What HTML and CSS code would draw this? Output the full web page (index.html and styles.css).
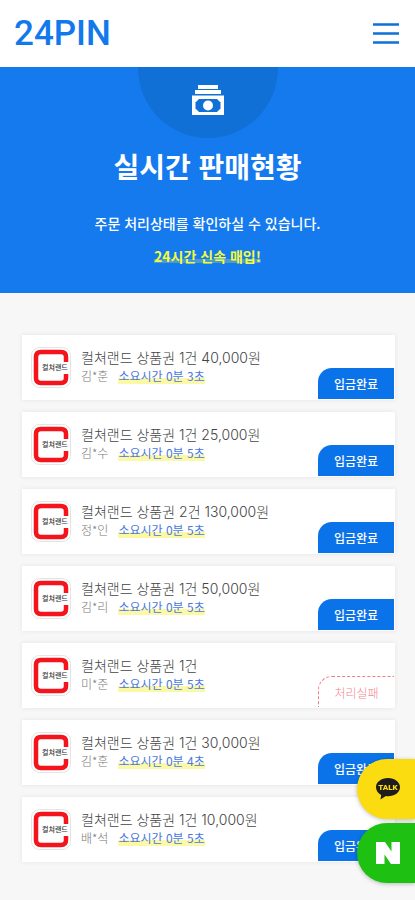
FILE: index.html
```
<!DOCTYPE html>
<html lang="ko">
<head>
<meta charset="UTF-8" />
<meta name="viewport" content="width=device-width, initial-scale=1" />
<title>24PIN 실시간 판매현황</title>
<link rel="stylesheet" href="styles.css">
</head>
<body>
  <header class="header">
    <a href="#" class="logo">24PIN</a>
    <button type="button" class="menu-btn" aria-label="메뉴">
      <svg width="26" height="22" viewBox="0 0 26 22" aria-hidden="true">
        <path d="M0 1.500h26M0 10.500h26M0 19.500h26" stroke="currentColor" stroke-width="2.600" />
      </svg>
    </button>
  </header>

  <section class="hero">
    <div class="hero-icon">
      <svg width="32" height="30" viewBox="0 0 32 30" aria-hidden="true">
        <path fill="#fff" d="M6 0h20v4H6zM3 5h26v4H3zM0 10.500h32V30H0z" />
        <path fill="#1170d6" d="M7 14h18l3.500 3.500v6L25 27H7l-3.500-3.500v-6z" />
        <circle cx="16" cy="20.500" r="5" fill="#fff" />
      </svg>
    </div>
    <h1>실시간 판매현황</h1>
    <p class="hero-text">주문 처리상태를 확인하실 수 있습니다.</p>
    <p class="hero-point"><span>24시간 신속 매입!</span></p>
  </section>

  <main>
    <ul class="orders" id="orders"></ul>
  </main>

  <nav class="quick" aria-label="상담">
    <a href="#" class="quick-link talk" aria-label="카카오톡 상담">
      <svg width="24" height="22" viewBox="0 0 24 22" aria-hidden="true">
        <path fill="#1f1c1d" d="M12 0C5.300 0 0 4 0 9.200c0 3.200 2 6 5.200 7.700L4.500 21.500l5.300-3.500c.7.100 1.500.2 2.200.2 6.700 0 12-4 12-9S18.700 0 12 0z" />
        <text class="talk-text" x="12" y="12" text-anchor="middle">TALK</text>
      </svg>
    </a>
    <a href="#" class="quick-link naver" aria-label="네이버">
      <svg width="24" height="22" viewBox="0 0 24 22" aria-hidden="true">
        <path fill="#fff" d="M0 0h9l6.500 9.500V0H24v22h-9L8.500 12.500V22H0z" />
      </svg>
    </a>
  </nav>

  <script src="script.js"></script>
</body>
</html>
```

FILE: styles.css
```
* {
  box-sizing: border-box;
}

body {
  margin: 0;
  font-family: 'Noto Sans CJK KR', sans-serif;
  background: #f7f7f7;
  color: #444;
}

.header {
  display: flex;
  justify-content: space-between;
  align-items: center;
  height: 67px;
  padding: 0 16px 0 14px;
  background: #fff;
}

.logo {
  font-family: Roboto, sans-serif;
  font-size: 35px;
  font-weight: 500;
  line-height: 40px;
  color: #1279ed;
  text-decoration: none;
}

.menu-btn {
  display: flex;
  padding: 0;
  border: none;
  background: none;
  color: #1170d6;
  cursor: pointer;
}

.hero {
  display: flex;
  flex-direction: column;
  align-items: center;
  padding-bottom: 24px;
  background: #147aee;
  color: #fff;
  text-align: center;
}

.hero-icon {
  display: flex;
  justify-content: center;
  width: 140px;
  height: 71px;
  padding-top: 18px;
  border-radius: 0 0 70px 70px;
  background: #1170d6;
}

.hero h1 {
  margin: 8px 0 24px;
  font-size: 28px;
  font-weight: 700;
  line-height: 40px;
}

.hero p {
  margin: 0;
  font-size: 14px;
  line-height: 26px;
}

.hero .hero-text {
  margin-bottom: 7px;
  font-weight: 500;
}

.hero-point {
  font-weight: 700;
  color: #f2fb3c;
}

.hero-point span {
  background: linear-gradient(transparent 65%, rgba(255, 255, 80, 0.25) 65%, rgba(255, 255, 80, 0.25) 85%, transparent 85%);
}

.orders {
  display: flex;
  flex-direction: column;
  gap: 12px;
  margin: 0;
  padding: 42px 20px 38px 22px;
  list-style: none;
}

.order {
  display: flex;
  align-items: center;
  height: 65px;
  padding: 1px 1px 1px 9px;
  background: #fff;
  box-shadow: 0 0 5px rgba(0, 0, 0, 0.08);
}

.brand {
  flex: none;
  width: 40px;
  height: 41px;
  margin-right: 10px;
}

.brand-text {
  font-size: 7px;
  font-weight: 500;
  fill: #333;
}

.order-info {
  flex: 1;
  min-width: 0;
  padding-bottom: 3px;
  white-space: nowrap;
}

.order-title {
  margin: 0;
  font-family: Inter, 'Noto Sans CJK KR', sans-serif;
  font-size: 14px;
  font-weight: 300;
  line-height: 20px;
}

.order-meta {
  display: flex;
  gap: 10px;
  margin: 0;
  font-size: 12px;
  font-weight: 300;
  line-height: 16px;
  color: #777;
}

.order-time {
  font-weight: 400;
  color: #4a78e0;
  background: linear-gradient(transparent 65%, #fbf8a6 65%);
}

.order-state {
  align-self: flex-end;
  width: 76px;
  height: 31px;
  border-radius: 14px 0 0 0;
  background: #0b73ea;
  color: #fff;
  font-size: 12px;
  font-weight: 500;
  line-height: 31px;
  text-align: center;
}

.order-state.fail {
  border: 1px dashed #f07c84;
  border-width: 1px 0 0 1px;
  background: #fff;
  color: #f3868d;
  font-weight: 300;
}

.quick {
  position: fixed;
  right: 0;
  bottom: 17px;
  display: flex;
  flex-direction: column;
  gap: 4px;
}

.quick-link {
  display: flex;
  align-items: center;
  width: 58px;
  height: 60px;
  padding-left: 19px;
  border-radius: 30px 0 0 30px;
  box-shadow: 0 1px 4px rgba(0, 0, 0, 0.25);
}

.talk {
  background: #fbdc10;
}

.talk-text {
  font-family: Roboto, sans-serif;
  font-size: 8px;
  font-weight: 900;
  fill: #fbdc10;
}

.naver {
  background: #1ec011;
}
```

FILE: script.js
```
const orders = [
  { title: '컬쳐랜드 상품권 1건 40,000원', name: '김*훈', time: '소요시간 0분 3초', done: true },
  { title: '컬쳐랜드 상품권 1건 25,000원', name: '김*수', time: '소요시간 0분 5초', done: true },
  { title: '컬쳐랜드 상품권 2건 130,000원', name: '정*인', time: '소요시간 0분 5초', done: true },
  { title: '컬쳐랜드 상품권 1건 50,000원', name: '김*리', time: '소요시간 0분 5초', done: true },
  { title: '컬쳐랜드 상품권 1건', name: '미*준', time: '소요시간 0분 5초', done: false },
  { title: '컬쳐랜드 상품권 1건 30,000원', name: '김*훈', time: '소요시간 0분 4초', done: true },
  { title: '컬쳐랜드 상품권 1건 10,000원', name: '배*석', time: '소요시간 0분 5초', done: true }
];

document.getElementById('orders').innerHTML = orders.map(order => `
  <li class="order">
    <svg class="brand" viewBox="0 0 40 41" aria-hidden="true">
      <rect x="0.5" y="0.5" width="39" height="40" rx="8" fill="#fff" stroke="#e4e4e4" />
      <path d="M35 15V10Q35 5 30 5H10Q5 5 5 10V31Q5 36 10 36H30Q35 36 35 31V27" fill="none" stroke="#f5141b" stroke-width="4.500" />
      <text class="brand-text" x="11" y="23">컬쳐랜드</text>
    </svg>
    <div class="order-info">
      <p class="order-title">${order.title}</p>
      <p class="order-meta"><span>${order.name}</span><span class="order-time">${order.time}</span></p>
    </div>
    <div class="order-state${order.done ? '' : ' fail'}">${order.done ? '입금완료' : '처리실패'}</div>
  </li>`).join('');
```
